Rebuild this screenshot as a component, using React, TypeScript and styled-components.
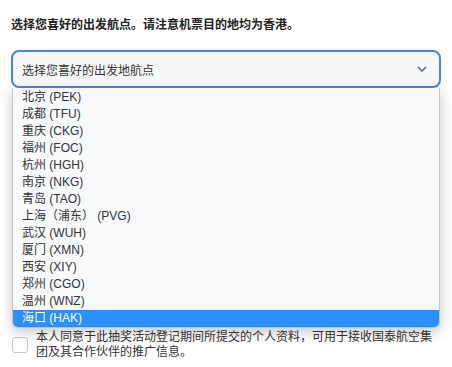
import React from 'react';
import styled, { createGlobalStyle } from 'styled-components';

const airports = [
  '北京 (PEK)',
  '成都 (TFU)',
  '重庆 (CKG)',
  '福州 (FOC)',
  '杭州 (HGH)',
  '南京 (NKG)',
  '青岛 (TAO)',
  '上海（浦东） (PVG)',
  '武汉 (WUH)',
  '厦门 (XMN)',
  '西安 (XIY)',
  '郑州 (CGO)',
  '温州 (WNZ)',
  '海口 (HAK)',
];

const GlobalStyle = createGlobalStyle`
  body {
    margin: 0;
    background: #ffffff;
    font-family: "Liberation Sans", "Noto Sans CJK SC", sans-serif;
    color: #333333;
  }
`;

const Page = styled.div`
  padding: 17px 11px 0 11px;
  width: 430px;
`;

const Label = styled.div`
  font-size: 12px;
  font-weight: bold;
  line-height: 16px;
  color: #222;
`;

const SelectWrap = styled.div`
  position: relative;
  margin-top: 17px;
`;

const SelectBox = styled.div`
  box-sizing: border-box;
  height: 38px;
  border: 2px solid #4a84e6;
  border-radius: 8px;
  background: #f7f8fa;
  display: flex;
  align-items: center;
  justify-content: space-between;
  padding: 0 12px 0 9px;
  font-size: 12px;
  color: #333;
`;

const Dropdown = styled.ul`
  position: absolute;
  left: 1px;
  right: 1px;
  top: 38px;
  margin: 0;
  padding: 1px 0 0 0;
  list-style: none;
  background: #f8f9fb;
  border: 1px solid #c4c4c4;
  border-top: none;
  border-radius: 0 0 6px 6px;
  box-shadow: 0 4px 14px rgba(0, 0, 0, 0.22);
  overflow: hidden;
  z-index: 2;
`;

const Option = styled.li<{ $active?: boolean }>`
  height: 17px;
  line-height: 17px;
  padding-left: 9px;
  font-size: 12px;
  white-space: pre;
  color: ${p => (p.$active ? '#ffffff' : '#333333')};
  background: ${p => (p.$active ? '#2990ff' : 'transparent')};
`;

const Consent = styled.div`
  display: flex;
  align-items: center;
  gap: 8px;
  margin-top: 242px;
  padding-left: 1px;
`;

const Checkbox = styled.span`
  flex: none;
  box-sizing: border-box;
  width: 16px;
  height: 16px;
  border: 1px solid #c9c9c9;
  border-radius: 3px;
  background: #fff;
`;

const ConsentText = styled.div`
  font-size: 12px;
  line-height: 15px;
  color: #333;
`;

const Chevron = () => (
  <svg width="10" height="6" viewBox="0 0 10 6">
    <polyline points="1,1 5,5 9,1" fill="none" stroke="#5f6368" strokeWidth="1.5" />
  </svg>
);

export default function App() {
  return (
    <Page>
      <GlobalStyle />
      <Label>选择您喜好的出发航点。请注意机票目的地均为香港。</Label>
      <SelectWrap>
        <SelectBox>
          <span>选择您喜好的出发地航点</span>
          <Chevron />
        </SelectBox>
        <Dropdown>
          {airports.map((a, i) => (
            <Option key={a} $active={i === airports.length - 1}>
              {a}
            </Option>
          ))}
        </Dropdown>
      </SelectWrap>
      <Consent>
        <Checkbox />
        <ConsentText>
          本人同意于此抽奖活动登记期间所提交的个人资料，可用于接收国泰航空集团及其合作伙伴的推广信息。
        </ConsentText>
      </Consent>
    </Page>
  );
}
